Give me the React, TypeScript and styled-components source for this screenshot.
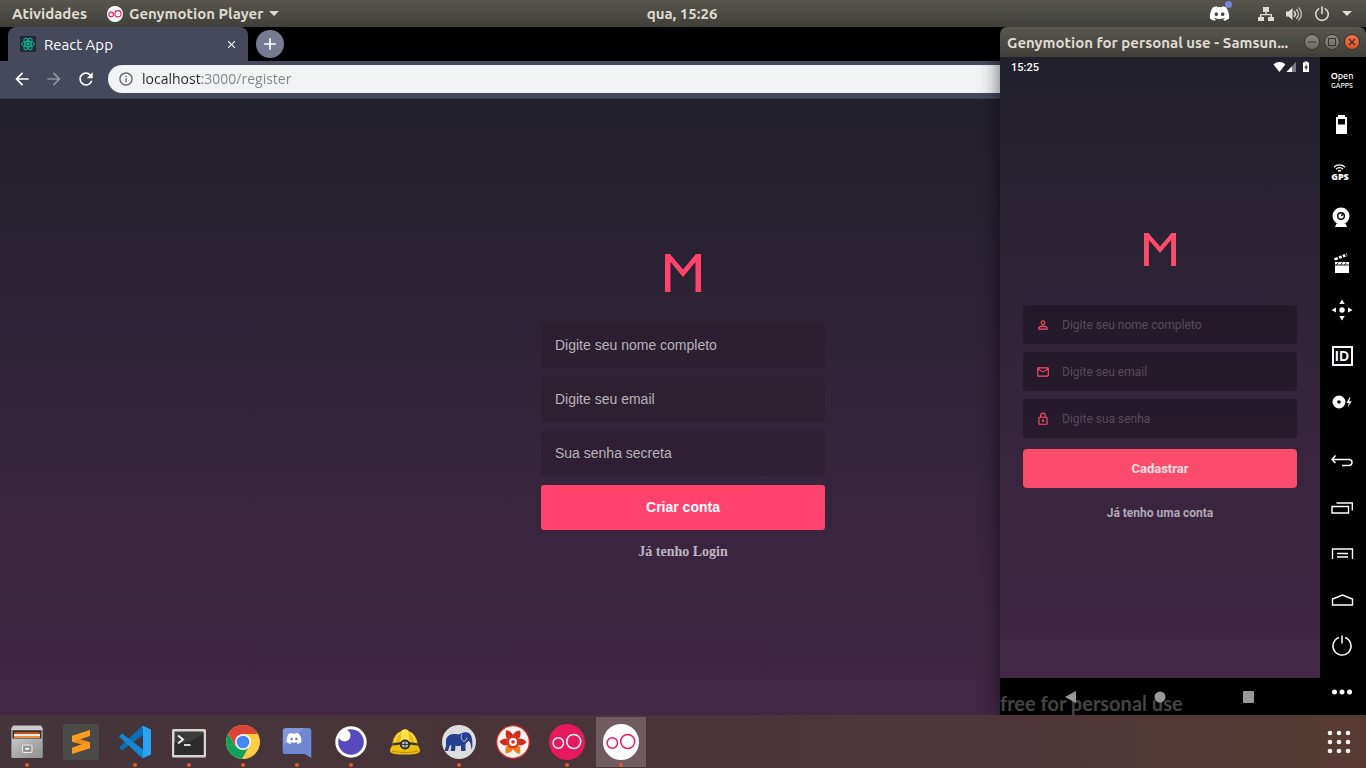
import React from 'react';
import styled, { createGlobalStyle, css } from 'styled-components';
import {
  MdAdd,
  MdArrowBack,
  MdArrowForward,
  MdClose,
  MdInfoOutline,
  MdLockOutline,
  MdMailOutline,
  MdPersonOutline,
  MdRefresh,
} from 'react-icons/md';
import { FaDiscord } from 'react-icons/fa';

const uiFont = `Ubuntu, 'Noto Sans', 'Open Sans', sans-serif`;
const pageGradient = 'linear-gradient(180deg, #22202c 0%, #422845 100%)';

const GlobalStyle = createGlobalStyle`
  *, *::before, *::after { box-sizing: border-box; }
  body { margin: 0; background: #000; font-family: ${uiFont}; }
  button, input { font: inherit; margin: 0; }
  button { border: 0; padding: 0; background: none; color: inherit; cursor: pointer; }
  svg { display: block; flex: none; }
`;

/* ---------- desktop shell ---------- */

const Desktop = styled.div`
  display: flex;
  flex-direction: column;
  min-height: 100vh;
`;

const TopBar = styled.header`
  display: grid;
  grid-template-columns: 1fr auto 1fr;
  align-items: center;
  height: 27px;
  padding: 0 14px 0 12px;
  background: linear-gradient(180deg, #57554d, #403f3a);
  color: #dfdbd2;
  font-size: 15px;
  font-weight: 700;
`;

const TopGroup = styled.div<{ $end?: boolean }>`
  display: flex;
  align-items: center;
  gap: ${(p) => (p.$end ? 12 : 20)}px;
  justify-content: ${(p) => (p.$end ? 'flex-end' : 'flex-start')};
`;

const TopButton = styled.button`
  display: flex;
  align-items: center;
  gap: 6px;
  white-space: nowrap;
`;

const DiscordTray = styled.button`
  position: relative;
  margin-right: 16px;
  color: #fff;
`;

const TrayBadge = styled.span`
  position: absolute;
  top: -2px;
  right: -2px;
  width: 7px;
  height: 7px;
  border-radius: 50%;
  background: #7289da;
`;

const Workspace = styled.main`
  position: relative;
  flex: 1;
  display: flex;
  flex-direction: column;
  overflow: hidden;
`;

/* ---------- browser ---------- */

const TabStrip = styled.div`
  display: flex;
  gap: 8px;
  height: 34px;
  padding: 0 8px;
  background: #000;
`;

const Tab = styled.div`
  display: flex;
  align-items: center;
  width: 240px;
  padding: 0 10px 0 12px;
  gap: 8px;
  border-radius: 8px 8px 0 0;
  background: #46485c;
  color: #fff;
  font-size: 15px;
`;

const TabTitle = styled.span`
  flex: 1;
`;

const NewTab = styled.button`
  display: grid;
  place-items: center;
  align-self: center;
  width: 28px;
  height: 28px;
  border-radius: 50%;
  background: #777b91;
  color: #fff;
`;

const Toolbar = styled.div`
  display: flex;
  align-items: center;
  gap: 12px;
  height: 38px;
  padding: 0 12px 2px;
  background: #46485c;
  border-bottom: 1px solid #3a3b4b;
`;

const NavButton = styled.button`
  color: #fff;
  &:disabled { color: #9193a0; }
`;

const AddressBar = styled.label`
  flex: 1;
  display: flex;
  align-items: center;
  gap: 8px;
  height: 28px;
  padding: 0 10px;
  border-radius: 14px;
  background: #f1f3f4;
  color: #5f6368;
`;

const AddressInput = styled.input`
  flex: 1;
  min-width: 0;
  padding: 0;
  border: 0;
  outline: 0;
  font-family: 'Open Sans', sans-serif;
  font-size: 14px;
  background: linear-gradient(90deg, #26282b 60px, #80858a 60px);
  background-clip: text;
  -webkit-background-clip: text;
  -webkit-text-fill-color: transparent;
`;

const WebPage = styled.section`
  flex: 1;
  display: flex;
  align-items: center;
  justify-content: center;
  background: ${pageGradient};
`;

const WebForm = styled.form`
  display: flex;
  flex-direction: column;
  align-items: center;
  gap: 9px;
  width: 284px;
  font-family: 'Liberation Sans', sans-serif;
  font-size: 14px;
`;

const WebLogo = styled.div`
  margin-bottom: 22px;
`;

const WebField = styled.input`
  width: 100%;
  height: 45px;
  padding: 0 14px 2px;
  border: 0;
  border-radius: 3px;
  background: rgba(40, 28, 42, 0.5);
  color: #fff;
  &::placeholder { color: #b8b4ba; opacity: 1; }
`;

const submitColors = css<{ $tone: string }>`
  background: ${(p) => p.$tone};
  font-weight: 700;
`;

const WebSubmit = styled.button<{ $tone: string }>`
  ${submitColors}
  width: 100%;
  height: 45px;
  padding-bottom: 2px;
  border-radius: 3px;
  color: #fff;
`;

const WebLink = styled.a`
  margin-top: 4px;
  color: #bdb5c0;
  font-family: 'Liberation Serif', serif;
  font-size: 14px;
  font-weight: 700;
  line-height: 17px;
  text-decoration: none;
`;

/* ---------- phone emulator window ---------- */

const PhoneWindow = styled.aside`
  position: absolute;
  top: 0;
  right: 0;
  bottom: 0;
  width: 366px;
  display: flex;
  flex-direction: column;
  border-radius: 7px 7px 0 0;
  box-shadow: 0 6px 20px rgba(0, 0, 0, 0.6);
`;

const TitleBar = styled.div`
  display: flex;
  align-items: center;
  gap: 4px;
  height: 30px;
  padding: 0 6px 0 7px;
  border-radius: 7px 7px 0 0;
  background: linear-gradient(180deg, #59574f, #3f3e39);
  color: #dfdbd2;
`;

const WindowTitle = styled.span`
  flex: 1;
  font-size: 15px;
  font-weight: 700;
  white-space: nowrap;
`;

const WindowButton = styled.button<{ $close?: boolean }>`
  display: grid;
  place-items: center;
  width: 16px;
  height: 16px;
  border: 1px solid #35342f;
  border-radius: 50%;
  background: ${(p) =>
    p.$close ? 'linear-gradient(180deg, #f3734c, #e0501f)' : 'linear-gradient(180deg, #8a8880, #6c6a62)'};
  color: #35342f;
`;

const PhoneBody = styled.div`
  flex: 1;
  display: flex;
  background: #000;
`;

const Screen = styled.div`
  flex: 1;
  display: flex;
  flex-direction: column;
  font-family: Roboto, sans-serif;
`;

const ScreenContent = styled.div`
  flex: 1;
  display: flex;
  flex-direction: column;
  background: ${pageGradient};
`;

const StatusBar = styled.div`
  display: flex;
  align-items: center;
  justify-content: space-between;
  height: 20px;
  padding: 0 10px 0 11px;
  color: #fff;
  font-size: 11px;
  font-weight: 500;
`;

const PhoneForm = styled.form`
  flex: 1;
  display: flex;
  flex-direction: column;
  align-items: center;
  justify-content: center;
  gap: 8px;
  padding: 0 23px;
  font-size: 12px;
`;

const PhoneLogo = styled.div`
  margin-bottom: 31px;
`;

const PhoneField = styled.label`
  display: flex;
  align-items: center;
  gap: 12px;
  width: 100%;
  height: 39px;
  padding: 0 13px;
  border-radius: 4px;
  background: rgba(28, 20, 34, 0.6);
  color: #fc4c6b;
`;

const PhoneInput = styled.input`
  flex: 1;
  min-width: 0;
  padding: 0;
  border: 0;
  outline: 0;
  background: none;
  color: #fff;
  &::placeholder { color: #564b5a; opacity: 1; }
`;

const PhoneSubmit = styled.button<{ $tone: string }>`
  ${submitColors}
  width: 100%;
  height: 39px;
  margin-top: 3px;
  border-radius: 4px;
  color: #fee0e5;
  font-size: 13px;
`;

const PhoneLink = styled.a`
  margin-top: 8px;
  color: #b0a8b4;
  font-weight: 700;
  line-height: 18px;
  text-decoration: none;
`;

const AndroidNav = styled.nav`
  position: relative;
  display: flex;
  align-items: center;
  justify-content: space-between;
  height: 37px;
  padding: 0 65px 0 64px;
  background: #000;
`;

const Watermark = styled.span`
  position: absolute;
  left: 0;
  bottom: 0;
  color: #444;
  font-family: Lato, sans-serif;
  font-size: 20px;
  font-weight: 700;
  line-height: 24px;
  white-space: nowrap;
`;

const AndroidButton = styled.button`
  position: relative;
`;

const Rail = styled.div`
  display: flex;
  flex-direction: column;
  justify-content: space-between;
  width: 46px;
  background: #000;
  color: #fff;
`;

const RailButton = styled.button`
  display: grid;
  place-items: center;
  width: 44px;
  height: 46px;
`;

const Gapps = styled.span`
  display: flex;
  flex-direction: column;
  align-items: center;
  font-size: 9px;
  font-weight: 500;
  line-height: 9px;
`;

const GappsSmall = styled.span`
  font-size: 7px;
  line-height: 8px;
`;

const GpsMark = styled.span`
  display: flex;
  flex-direction: column;
  align-items: center;
  padding-right: 4px;
  font-family: 'Open Sans', sans-serif;
  font-size: 9px;
  font-weight: 800;
  line-height: 9px;
`;

/* ---------- dock ---------- */

const Dock = styled.footer`
  display: flex;
  align-items: center;
  gap: 4px;
  height: 53px;
  padding: 0 2px;
  background: linear-gradient(90deg, #43353a 0%, #493439 45%, #50363a 75%, #563a32 100%);
`;

const DockItem = styled.button<{ $active?: boolean; $end?: boolean }>`
  position: relative;
  display: grid;
  place-items: center;
  width: 50px;
  height: 50px;
  margin-left: ${(p) => (p.$end ? 'auto' : '0')};
  background: ${(p) => (p.$active ? '#6f5c60' : 'none')};
`;

const RunningDot = styled.span`
  position: absolute;
  left: 23px;
  bottom: 0;
  width: 4px;
  height: 4px;
  border-radius: 50%;
  background: #e95420;
`;

/* ---------- drawings ---------- */

const MLogo = ({ width, height, color }: { width: number; height: number; color: string }) => (
  <svg width={width} height={height} viewBox="0 0 36 38" preserveAspectRatio="none" fill={color} role="img" aria-label="M">
    <path d="M0 0H5L18 15.500L31 0H36V38H30.500V8L18 23L5.500 8V38H0Z" />
  </svg>
);

const GenyIcon = ({ size, bg, fg, stroke = 1.5 }: { size: number; bg: string; fg: string; stroke?: number }) => (
  <svg width={size} height={size} viewBox="0 0 36 36" fill="none" stroke={fg} strokeWidth={stroke}>
    <circle cx="18" cy="18" r="18" fill={bg} stroke="none" />
    <circle cx="9.300" cy="19" r="5.200" />
    <circle cx="24.700" cy="17.500" r="7" />
  </svg>
);

const Caret = () => (
  <svg width="10" height="5" viewBox="0 0 10 5" fill="currentColor">
    <path d="M0 0H10L5 5Z" />
  </svg>
);

const ReactFavicon = () => (
  <svg width="16" height="16" viewBox="0 0 16 16" fill="none" stroke="#00b894" strokeWidth="1">
    <rect width="16" height="16" fill="#222834" stroke="none" />
    <ellipse cx="8" cy="8" rx="6.500" ry="2.600" />
    <ellipse cx="8" cy="8" rx="6.500" ry="2.600" transform="rotate(60 8 8)" />
    <ellipse cx="8" cy="8" rx="6.500" ry="2.600" transform="rotate(120 8 8)" />
    <circle cx="8" cy="8" r="1.400" fill="#00b894" stroke="none" />
  </svg>
);

const NetworkIcon = () => (
  <svg width="16" height="16" viewBox="0 0 16 16" fill="#dfdbd2">
    <path d="M5 1h6v5H8.700v2H14v3h2v4h-6v-4h2.600V9.300H3.400V11H6v4H0v-4h2V8h5.300V6H5z" />
  </svg>
);

const VolumeIcon = () => (
  <svg width="16" height="16" viewBox="0 0 16 16" fill="none" stroke="#dfdbd2" strokeWidth="1.500" strokeLinecap="round">
    <path d="M0 5.500h2.500L6.500 2v12l-4-3.500H0z" fill="#dfdbd2" stroke="none" />
    <path d="M8.300 5.500c1.300 1.500 1.300 3.500 0 5" />
    <path d="M10.600 3.800c2.300 2.500 2.300 6 0 8.400" opacity=".85" />
    <path d="M12.900 2c3.200 3.500 3.200 8.500 0 12" opacity=".7" />
  </svg>
);

const PowerIcon = () => (
  <svg width="16" height="16" viewBox="0 0 16 16" fill="none" stroke="#dfdbd2" strokeWidth="1.600" strokeLinecap="round">
    <path d="M8 1v6.500M4.600 2.800a6.300 6.300 0 1 0 6.800 0" />
  </svg>
);

const StatusIcons = () => (
  <svg width="37" height="12" viewBox="0 0 37 12" fill="#fff">
    <path d="M0.500 3.500C4 .3 9 .3 12.300 3.500L6.400 11Z" />
    <path d="M23 1V11H13.500Z" opacity=".4" />
    <path d="M19 5.200V11H13.500Z" />
    <path fillRule="evenodd" d="M30 1.500h1.500V.5h3v1H36v9.500h-6zM33.600 3L31.300 6.800h1.400v2.700l2.200-3.800h-1.300z" />
  </svg>
);

const lineProps = { fill: 'none', stroke: 'currentColor', strokeWidth: 1.2 };

const Glyph = ({ children }: { children: React.ReactNode }) => (
  <svg width="24" height="24" viewBox="0 0 24 24" fill="currentColor">
    {children}
  </svg>
);

const BatteryGlyph = () => (
  <Glyph>
    <path fillRule="evenodd" d="M8 1h7v2h2v17H6V3h2zM8 5v5.500h7V5z" />
  </Glyph>
);

const GpsWaves = () => (
  <svg width="13" height="8" viewBox="0 0 13 8" fill="none" stroke="currentColor" strokeWidth="1.300">
    <path d="M1 3.200C4 .2 9 .2 12 3.200M3 5.200c2-2 5-2 7 0M5 7.200c1-1 2-1 3 0" />
  </svg>
);

const WebcamGlyph = () => (
  <Glyph>
    <path fillRule="evenodd" d="M11 1.500a8.500 8.500 0 1 1 0 17a8.500 8.500 0 1 1 0-17zM11 6a4 4 0 1 0 0 8a4 4 0 1 0 0-8z" />
    <circle cx="11" cy="10" r="2.600" />
    <circle cx="12" cy="9" r="1" fill="#000" />
    <path d="M6.500 17.500h9l1.500 3.500H5z" />
  </Glyph>
);

const ClapperGlyph = () => (
  <Glyph>
    <path d="M5 10h14v11H5z" />
    <path d="M4 6.200L16.500 1.200l1 2.800L5 8.600z" />
    <path d="M7.500 4l1.800 3.500M11.300 2.500l1.800 3.500M15 1l1.500 3.500" stroke="#000" strokeWidth="1.300" />
    <path d="M6.500 13l1.800-2.500M10.500 13l1.800-2.500M14.500 13l1.800-2.500M5 13h14" stroke="#000" strokeWidth=".9" />
  </Glyph>
);

const MoveGlyph = () => (
  <Glyph>
    <circle cx="12" cy="12" r="2.700" />
    <path d="M12 1.500l2.700 4.500H9.300zM12 22.500l2.700-4.500H9.300zM1.500 12L6 9.500v5zM22.500 12L18 9.500v5z" />
  </Glyph>
);

const IdBox = styled.span`
  display: grid;
  place-items: center;
  width: 21px;
  height: 20px;
  border: 2px solid currentColor;
  font-size: 14px;
  font-weight: 700;
  line-height: 14px;
`;

const DiscFlashGlyph = () => (
  <Glyph>
    <path fillRule="evenodd" d="M9 5.500a6.500 6.500 0 1 1 0 13a6.500 6.500 0 1 1 0-13zM9 10.200a1.800 1.800 0 1 0 0 3.600a1.800 1.800 0 1 0 0-3.600z" />
    <path d="M19.500 7.500L16.500 13h2.300l-1 4 4-5.800h-2.600l1.300-3.700z" />
  </Glyph>
);

const BackGlyph = () => (
  <Glyph>
    <path {...lineProps} strokeWidth={1.500} d="M5.500 5.500L2 9.500L5.500 13M2 9.500H19a3 3 0 0 1 0 6H12" />
  </Glyph>
);

const RecentGlyph = () => (
  <Glyph>
    <path {...lineProps} strokeWidth={1.400} d="M2 10.500h16.500V17H2zM6.500 7h15.800v7.500" />
  </Glyph>
);

const MenuGlyph = () => (
  <Glyph>
    <path {...lineProps} strokeWidth={1.400} d="M2.500 17V7H22.500V17M7 11.500h11M7 15h11" />
  </Glyph>
);

const HomeGlyph = () => (
  <Glyph>
    <path {...lineProps} strokeWidth={1.400} d="M2.500 17V11L12.500 7l10 4v6z" />
  </Glyph>
);

const RailPowerGlyph = () => (
  <Glyph>
    <path {...lineProps} strokeWidth={1.500} d="M12 1.500v8M9 3.500a9 9 0 1 0 6 0" />
  </Glyph>
);

const MoreGlyph = () => (
  <Glyph>
    <circle cx="4.500" cy="12" r="2.500" />
    <circle cx="12" cy="12" r="2.500" />
    <circle cx="19.500" cy="12" r="2.500" />
  </Glyph>
);

const DockSvg = ({ children }: { children: React.ReactNode }) => (
  <svg width="36" height="36" viewBox="0 0 36 36">
    {children}
  </svg>
);

const FilesIcon = () => (
  <DockSvg>
    <defs>
      <linearGradient id="cabinet" x1="0" y1="0" x2="1" y2="1">
        <stop offset="0" stopColor="#c6c6c6" />
        <stop offset="1" stopColor="#8f8f8f" />
      </linearGradient>
    </defs>
    <rect x="2" y="3" width="32" height="31" rx="1.500" fill="#858585" />
    <path d="M4 1.500h28l2 4.500H2z" fill="#c9c9c9" />
    <rect x="4" y="6.500" width="28" height="9" fill="#3a2a22" />
    <rect x="5.500" y="8" width="25" height="3" fill="#c4521d" />
    <rect x="5" y="10" width="26" height="2" fill="#f2ede6" />
    <rect x="5" y="12" width="26" height="2" fill="#ef8c3c" />
    <rect x="3" y="14.500" width="30" height="19.500" rx="1" fill="url(#cabinet)" />
    <rect x="13.500" y="21" width="9.500" height="7.500" rx="1" fill="#999" stroke="#ececec" />
    <rect x="15.800" y="23.500" width="5" height="2.500" fill="#fff" stroke="#777" strokeWidth=".6" />
  </DockSvg>
);

const SublimeIcon = () => (
  <DockSvg>
    <rect width="36" height="36" rx="2.500" fill="#4a4b49" />
    <path d="M9 11.700L27 6v6L17 15.300l10 3v6L9 30v-6.300l9.700-3.400L9 17.700z" fill="#ff9a20" />
    <path d="M9 17.700l9.700 2.600 3.300-1.300 5-.7-10-3z" fill="#e57f12" opacity=".6" />
  </DockSvg>
);

const CodeIcon = () => (
  <DockSvg>
    <path d="M2 23.500L24 3l2-1v9L5 26.500z" fill="#0a6db5" />
    <path d="M2 12.500L5 9.500 26 25.500V34l-2-1z" fill="#1487d2" />
    <path d="M26 2l8 3.500v25L26 34l-2-1c1.500 1 2-.2 2-1.500v-27C26 3.200 25.500 2 24 3z" fill="#2aa3f2" />
  </DockSvg>
);

const TerminalIcon = () => (
  <DockSvg>
    <rect x="1" y="5" width="34" height="28.500" rx="1.500" fill="#d6d5d2" />
    <rect x="3.500" y="7.500" width="29" height="23.500" fill="#3b3c3b" />
    <path d="M3.500 31V18C15 21 25 16 32.500 9v22z" fill="#2b2c2b" />
    <path d="M7 11.500l5 4-5 4" fill="none" stroke="#eee" strokeWidth="2" />
    <path d="M13 21h6.500" stroke="#eee" strokeWidth="1.800" />
  </DockSvg>
);

const ChromeIcon = () => (
  <DockSvg>
    <circle cx="18" cy="18" r="17" fill="#ffcd46" />
    <path d="M18 18L10.600 22.300 3.300 9.500A17 17 0 0 0 17 35l7-12.500z" fill="#12a05c" />
    <path d="M18 10H32.900A17 17 0 0 0 3.300 9.500L10.700 22z" fill="#dc4437" />
    <circle cx="18" cy="18" r="8" fill="#f4f4f4" />
    <circle cx="18" cy="18" r="6.300" fill="#4587f3" />
  </DockSvg>
);

const DiscordIcon = () => (
  <DockSvg>
    <path d="M6.500 4h23a2.800 2.800 0 0 1 2.800 2.800V34l-6.500-4H6.500a2.800 2.800 0 0 1-2.800-2.800V6.800A2.800 2.800 0 0 1 6.500 4z" fill="#6f86d1" />
    <path d="M6.500 4h19L4 22V6.800A2.800 2.800 0 0 1 6.500 4z" fill="#fff" opacity=".15" />
    <FaDiscord x="7" y="6.500" width="22" height="22" color="#fff" />
  </DockSvg>
);

const InsomniaIcon = () => (
  <DockSvg>
    <circle cx="18" cy="18" r="15.700" fill="#fff" />
    <circle cx="18" cy="18" r="12.800" fill="#5849be" />
    <circle cx="11.500" cy="11.500" r="6" fill="#fff" />
  </DockSvg>
);

const HelmetIcon = () => (
  <DockSvg>
    <path d="M3 27c0-3 1.500-4 2.300-5.500C5.500 14 9.500 8.500 14.500 7c1-2 6-2 7 0 5 1.500 9 7 9.200 14.500C31.500 23 33 24 33 27c0 3-8 3.500-15 3.500S3 30 3 27z" fill="#eebd0c" />
    <path d="M14.500 7c1-2 6-2 7 0l1 11h-9z" fill="#ffe24a" />
    <path d="M8 18c1-5 2.500-7.500 5-9M28 18c-1-5-2.500-7.500-5-9" stroke="#fff3a0" fill="none" />
    <path d="M5.500 19.500c8-2 17-2 25 0v2c-8-1.500-17-1.500-25 0z" fill="#34311f" />
    <circle cx="18" cy="20.500" r="5" fill="#222" />
    <circle cx="18" cy="20.500" r="3.200" fill="#b9b9b9" />
    <path d="M18 17v7M14.800 20.500h6.400" stroke="#333" strokeWidth=".9" />
    <path d="M5 27c8 2 18 2 26 0" stroke="#b88a00" fill="none" />
  </DockSvg>
);

const ElephantIcon = () => (
  <DockSvg>
    <circle cx="18" cy="18" r="17" fill="#dedede" />
    <path
      d="M5 16c1-4 4-6 8-6 3 0 4 .5 6 0 3-2 7-2.500 9.500-.5 2.300 2 2.500 5 2.800 8 .1 2 .2 5-.3 8-.7-1-1-3-1.300-5-.4-2-.8-3-2.200-3.500-1 1-2.500 1.500-3 3.500V27h-4.500v-5.500c-2 .7-4 .6-5.500.2L14 27H9.500l1-5-1.500-1-2 6H3.500l1.500-5z"
      fill="#25408f"
    />
    <path d="M21 10c-1.500 3-1 6 2 7.500 1.500-.5 2.500-2 3-4" fill="none" stroke="#dedede" strokeWidth=".8" />
  </DockSvg>
);

const FlowerIcon = () => (
  <DockSvg>
    <circle cx="18" cy="18" r="16.300" fill="#f6f3f1" stroke="#d9281d" strokeWidth="1.200" />
    {[30, 90, 150, 210, 270, 330].map((angle) => (
      <path
        key={angle}
        transform={`rotate(${angle} 18 18)`}
        d="M18 18l-3.500-6.500C14.500 8.500 16 6 18.500 4.500c2 2 3 4.500 3 7z"
        fill={angle === 150 || angle === 210 ? '#ee7d1a' : '#cf2a1c'}
      />
    ))}
    <circle cx="18" cy="18" r="6.500" fill="#d9381c" />
    <circle cx="18" cy="18" r="4" fill="#fff" />
    <circle cx="18" cy="18" r="1.800" fill="#d3291c" />
  </DockSvg>
);

const AppsGrid = () => (
  <svg width="24" height="24" viewBox="0 0 24 24" fill="#f5f3f2">
    {[3, 12, 21].map((y) => [3, 12, 21].map((x) => <circle key={`${x}-${y}`} cx={x} cy={y} r="2.300" />))}
  </svg>
);

/* ---------- content ---------- */

const webFields = [
  { label: 'Digite seu nome completo', type: 'text' },
  { label: 'Digite seu email', type: 'email' },
  { label: 'Sua senha secreta', type: 'password' },
];

const phoneFields = [
  { label: 'Digite seu nome completo', type: 'text', Icon: MdPersonOutline },
  { label: 'Digite seu email', type: 'email', Icon: MdMailOutline },
  { label: 'Digite sua senha', type: 'password', Icon: MdLockOutline },
];

const railTop = [
  {
    name: 'Open GApps',
    icon: (
      <Gapps>
        <span><b>O</b>pen</span>
        <GappsSmall>GAPPS</GappsSmall>
      </Gapps>
    ),
  },
  { name: 'Battery', icon: <BatteryGlyph /> },
  { name: 'GPS', icon: <GpsMark><GpsWaves />GPS</GpsMark> },
  { name: 'Camera', icon: <WebcamGlyph /> },
  { name: 'Capture', icon: <ClapperGlyph /> },
  { name: 'Move', icon: <MoveGlyph /> },
  { name: 'Identifiers', icon: <IdBox>ID</IdBox> },
  { name: 'Disk', icon: <DiscFlashGlyph /> },
];

const railBottom = [
  { name: 'Back', icon: <BackGlyph /> },
  { name: 'Recent apps', icon: <RecentGlyph /> },
  { name: 'Menu', icon: <MenuGlyph /> },
  { name: 'Home', icon: <HomeGlyph /> },
  { name: 'Power', icon: <RailPowerGlyph /> },
  { name: 'More', icon: <MoreGlyph /> },
];

const dockApps = [
  { name: 'Files', icon: <FilesIcon />, running: true },
  { name: 'Sublime Text', icon: <SublimeIcon /> },
  { name: 'Visual Studio Code', icon: <CodeIcon />, running: true },
  { name: 'Terminal', icon: <TerminalIcon />, running: true },
  { name: 'Chrome', icon: <ChromeIcon />, running: true },
  { name: 'Discord', icon: <DiscordIcon />, running: true },
  { name: 'Insomnia', icon: <InsomniaIcon />, running: true },
  { name: 'Helmet', icon: <HelmetIcon /> },
  { name: 'Postgres', icon: <ElephantIcon />, running: true },
  { name: 'Flower', icon: <FlowerIcon /> },
  { name: 'Genymotion', icon: <GenyIcon size={36} bg="#e6195f" fg="#fff" />, running: true },
  { name: 'Genymotion Player', icon: <GenyIcon size={36} bg="#fff" fg="#e6195f" />, running: true, active: true },
];

const Browser = () => (
  <>
    <TabStrip>
      <Tab>
        <ReactFavicon />
        <TabTitle>React App</TabTitle>
        <NavButton aria-label="Close tab"><MdClose size={13} /></NavButton>
      </Tab>
      <NewTab aria-label="New tab"><MdAdd size={20} /></NewTab>
    </TabStrip>
    <Toolbar>
      <NavButton aria-label="Back"><MdArrowBack size={20} /></NavButton>
      <NavButton aria-label="Forward" disabled><MdArrowForward size={20} /></NavButton>
      <NavButton aria-label="Reload"><MdRefresh size={20} /></NavButton>
      <AddressBar>
        <MdInfoOutline size={16} />
        <AddressInput aria-label="Address" defaultValue="localhost:3000/register" />
      </AddressBar>
    </Toolbar>
    <WebPage>
      <WebForm onSubmit={(e) => e.preventDefault()}>
        <WebLogo><MLogo width={36} height={38} color="#ff436c" /></WebLogo>
        {webFields.map((f) => (
          <WebField key={f.label} type={f.type} placeholder={f.label} aria-label={f.label} />
        ))}
        <WebSubmit $tone="#ff436c">Criar conta</WebSubmit>
        <WebLink href="#login">Já tenho Login</WebLink>
      </WebForm>
    </WebPage>
  </>
);

const Phone = () => (
  <PhoneWindow>
    <TitleBar>
      <WindowTitle>Genymotion for personal use - Samsun...</WindowTitle>
      <WindowButton aria-label="Minimize">
        <svg width="8" height="8"><path d="M0 4h8" stroke="currentColor" /></svg>
      </WindowButton>
      <WindowButton aria-label="Maximize">
        <svg width="8" height="8"><rect x=".5" y=".5" width="7" height="7" fill="none" stroke="currentColor" /></svg>
      </WindowButton>
      <WindowButton $close aria-label="Close">
        <svg width="8" height="8"><path d="M1 1l6 6M7 1L1 7" stroke="currentColor" strokeWidth="1.300" /></svg>
      </WindowButton>
    </TitleBar>
    <PhoneBody>
      <Screen>
        <ScreenContent>
          <StatusBar>
            <span>15:25</span>
            <StatusIcons />
          </StatusBar>
          <PhoneForm onSubmit={(e) => e.preventDefault()}>
            <PhoneLogo><MLogo width={32} height={33} color="#fc4c6b" /></PhoneLogo>
            {phoneFields.map(({ label, type, Icon }) => (
              <PhoneField key={label}>
                <Icon size={14} />
                <PhoneInput type={type} placeholder={label} aria-label={label} />
              </PhoneField>
            ))}
            <PhoneSubmit $tone="#fc4c6b">Cadastrar</PhoneSubmit>
            <PhoneLink href="#login">Já tenho uma conta</PhoneLink>
          </PhoneForm>
        </ScreenContent>
        <AndroidNav>
          <Watermark>free for personal use</Watermark>
          <AndroidButton aria-label="Back">
            <svg width="13" height="12"><path d="M12 0v12L1 6z" fill="#999" /></svg>
          </AndroidButton>
          <AndroidButton aria-label="Home">
            <svg width="12" height="12"><circle cx="6" cy="6" r="5.500" fill="#999" /></svg>
          </AndroidButton>
          <AndroidButton aria-label="Overview">
            <svg width="12" height="12"><rect width="11" height="12" rx="1" fill="#999" /></svg>
          </AndroidButton>
        </AndroidNav>
      </Screen>
      <Rail>
        <div>{railTop.map((r) => <RailButton key={r.name} aria-label={r.name}>{r.icon}</RailButton>)}</div>
        <div>{railBottom.map((r) => <RailButton key={r.name} aria-label={r.name}>{r.icon}</RailButton>)}</div>
      </Rail>
    </PhoneBody>
  </PhoneWindow>
);

export default function App() {
  return (
    <Desktop>
      <GlobalStyle />
      <TopBar>
        <TopGroup>
          <TopButton>Atividades</TopButton>
          <TopButton>
            <GenyIcon size={16} bg="#fff" fg="#e6195f" stroke={2.5} />
            Genymotion Player
            <Caret />
          </TopButton>
        </TopGroup>
        <TopButton>qua, 15:26</TopButton>
        <TopGroup $end>
          <DiscordTray aria-label="Discord">
            <FaDiscord size={21} />
            <TrayBadge />
          </DiscordTray>
          <NetworkIcon />
          <VolumeIcon />
          <PowerIcon />
          <Caret />
        </TopGroup>
      </TopBar>
      <Workspace>
        <Browser />
        <Phone />
      </Workspace>
      <Dock>
        {dockApps.map((app) => (
          <DockItem key={app.name} $active={app.active} aria-label={app.name}>
            {app.icon}
            {app.running && <RunningDot />}
          </DockItem>
        ))}
        <DockItem $end aria-label="Show applications"><AppsGrid /></DockItem>
      </Dock>
    </Desktop>
  );
}
